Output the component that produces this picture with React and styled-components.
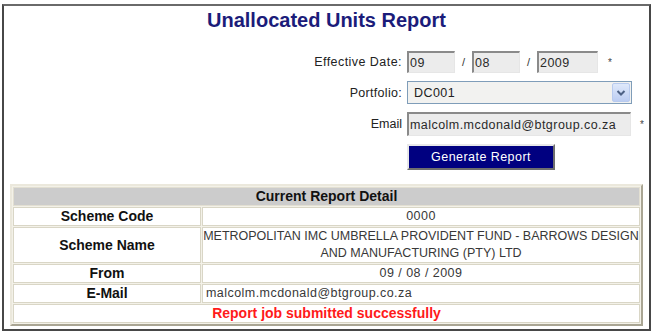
import React from "react";
import styled, { createGlobalStyle } from "styled-components";

const Global = createGlobalStyle`
  html, body { margin: 0; padding: 0; background: #ffffff; }
  body { font-family: "Liberation Sans", Arial, sans-serif; }
`;

const Frame = styled.div`
  margin: 4px 0 0 2px;
  width: 645px;
  height: 323px;
  border: 2px solid #474747;
  border-top-color: #6a6a6a;
  display: flex;
  flex-direction: column;
`;

const Title = styled.h1`
  margin: 2px 0 0;
  text-align: center;
  font-size: 20px;
  line-height: 24px;
  font-weight: bold;
  color: #1b1c7a;
`;

const Form = styled.div`
  display: grid;
  grid-template-columns: 398px auto;
  column-gap: 5px;
  row-gap: 8px;
  align-items: center;
  margin-top: 19px;
`;

const Label = styled.div`
  text-align: right;
  font-size: 12.5px;
  letter-spacing: ${(p) => p.$ls ?? 0.45}px;
  color: #222;
`;

const Field = styled.div`
  display: flex;
  align-items: center;
`;

const TextBox = styled.div`
  box-sizing: border-box;
  width: ${(p) => p.$w}px;
  height: ${(p) => p.$h || 22}px;
  background: #ececec;
  border: 1px solid #e6e6e6;
  border-top: 2px solid #8a8a8a;
  border-left: 2px solid #8a8a8a;
  font-size: 12.5px;
  letter-spacing: 0.45px;
  color: #2a2a2a;
  padding: 1px 1px 0 1px;
  display: flex;
  align-items: center;
  white-space: nowrap;
`;

const Sep = styled.span`
  width: 17px;
  text-align: center;
  font-size: 11px;
  color: #333;
`;

const Star = styled.span`
  margin-left: ${(p) => p.$ml || 10}px;
  font-size: 10px;
  color: #444;
`;

const Select = styled.div`
  box-sizing: border-box;
  width: 225px;
  height: 23px;
  border: 1px solid #7f9db9;
  background: #f2f2f0;
  display: flex;
  align-items: center;
  justify-content: space-between;
  padding: 1px 1px 1px 6px;
  font-size: 12.5px;
  letter-spacing: 0.45px;
  color: #222;
`;

const DropBtn = styled.div`
  box-sizing: border-box;
  width: 18px;
  height: 19px;
  border: 1px solid #b8cbef;
  border-radius: 2px;
  background: linear-gradient(#dfe9fb, #bccdf2);
  display: flex;
  align-items: center;
  justify-content: center;
`;

const Button = styled.div`
  box-sizing: border-box;
  width: 148px;
  height: 26px;
  background: #000080;
  color: #ffffff;
  font-size: 12.5px;
  letter-spacing: 0.45px;
  display: flex;
  align-items: center;
  justify-content: center;
  border: 2px solid;
  border-color: #e8e8e8 #6e6e6e #6e6e6e #e8e8e8;
`;

const Table = styled.table`
  margin: 14px 0 0 6px;
  width: 633px;
  border-collapse: separate;
  border-spacing: 1px;
  border: 2px solid;
  border-color: #ebe8dc #a9a593 #a9a593 #ebe8dc;
  background: #f3f1e8;
`;

const HeadCell = styled.th`
  background: #cccccc;
  height: 17px;
  padding: 0;
  font-size: 14px;
  line-height: 17px;
  font-weight: bold;
  color: #111;
  border: 1px solid #e2dfd2;
`;

const KeyCell = styled.td`
  width: 186px;
  background: #ffffff;
  text-align: center;
  font-size: 14px;
  line-height: 17px;
  font-weight: bold;
  color: #111;
  height: ${(p) => p.$h || 17}px;
  padding: 0;
  border: 1px solid #d9d6c6;
`;

const ValCell = styled.td`
  background: #ffffff;
  text-align: ${(p) => p.$align || "center"};
  font-size: 12.5px;
  letter-spacing: ${(p) => p.$ls ?? 0.45}px;
  line-height: 17px;
  color: #383838;
  padding: 0 0 0 ${(p) => (p.$align === "left" ? 3 : 0)}px;
  border: 1px solid #d9d6c6;
  white-space: nowrap;
`;

const MsgCell = styled.td`
  background: #ffffff;
  text-align: center;
  font-size: 14px;
  line-height: 17px;
  font-weight: bold;
  color: #ff1a1a;
  height: 17px;
  padding: 0;
  border: 1px solid #d9d6c6;
`;

const Chevron = () => (
  <svg width="10" height="8" viewBox="0 0 10 8">
    <path d="M1.5 2 L5 5.5 L8.5 2" fill="none" stroke="#4d6185" strokeWidth="2" />
  </svg>
);

export default function App() {
  return (
    <>
      <Global />
      <Frame>
        <Title>Unallocated Units Report</Title>
        <Form>
          <Label>Effective Date:</Label>
          <Field>
            <TextBox $w={48}>09</TextBox>
            <Sep>/</Sep>
            <TextBox $w={48}>08</TextBox>
            <Sep>/</Sep>
            <TextBox $w={61}>2009</TextBox>
            <Star>*</Star>
          </Field>
          <Label $ls={0.3}>Portfolio:</Label>
          <Field>
            <Select>
              DC001
              <DropBtn>
                <Chevron />
              </DropBtn>
            </Select>
          </Field>
          <Label $ls={0}>Email</Label>
          <Field>
            <TextBox $w={224} $h={24}>malcolm.mcdonald@btgroup.co.za</TextBox>
            <Star $ml={9}>*</Star>
          </Field>
          <div />
          <Field>
            <Button>Generate Report</Button>
          </Field>
        </Form>
        <Table>
          <tbody>
            <tr>
              <HeadCell colSpan={2}>Current Report Detail</HeadCell>
            </tr>
            <tr>
              <KeyCell>Scheme Code</KeyCell>
              <ValCell>0000</ValCell>
            </tr>
            <tr>
              <KeyCell $h={34}>Scheme Name</KeyCell>
              <ValCell $ls={0}>
                METROPOLITAN IMC UMBRELLA PROVIDENT FUND - BARROWS DESIGN
                <br />
                AND MANUFACTURING (PTY) LTD
              </ValCell>
            </tr>
            <tr>
              <KeyCell>From</KeyCell>
              <ValCell>09 / 08 / 2009</ValCell>
            </tr>
            <tr>
              <KeyCell>E-Mail</KeyCell>
              <ValCell $align="left">malcolm.mcdonald@btgroup.co.za</ValCell>
            </tr>
            <tr>
              <MsgCell colSpan={2}>Report job submitted successfully</MsgCell>
            </tr>
          </tbody>
        </Table>
      </Frame>
    </>
  );
}
